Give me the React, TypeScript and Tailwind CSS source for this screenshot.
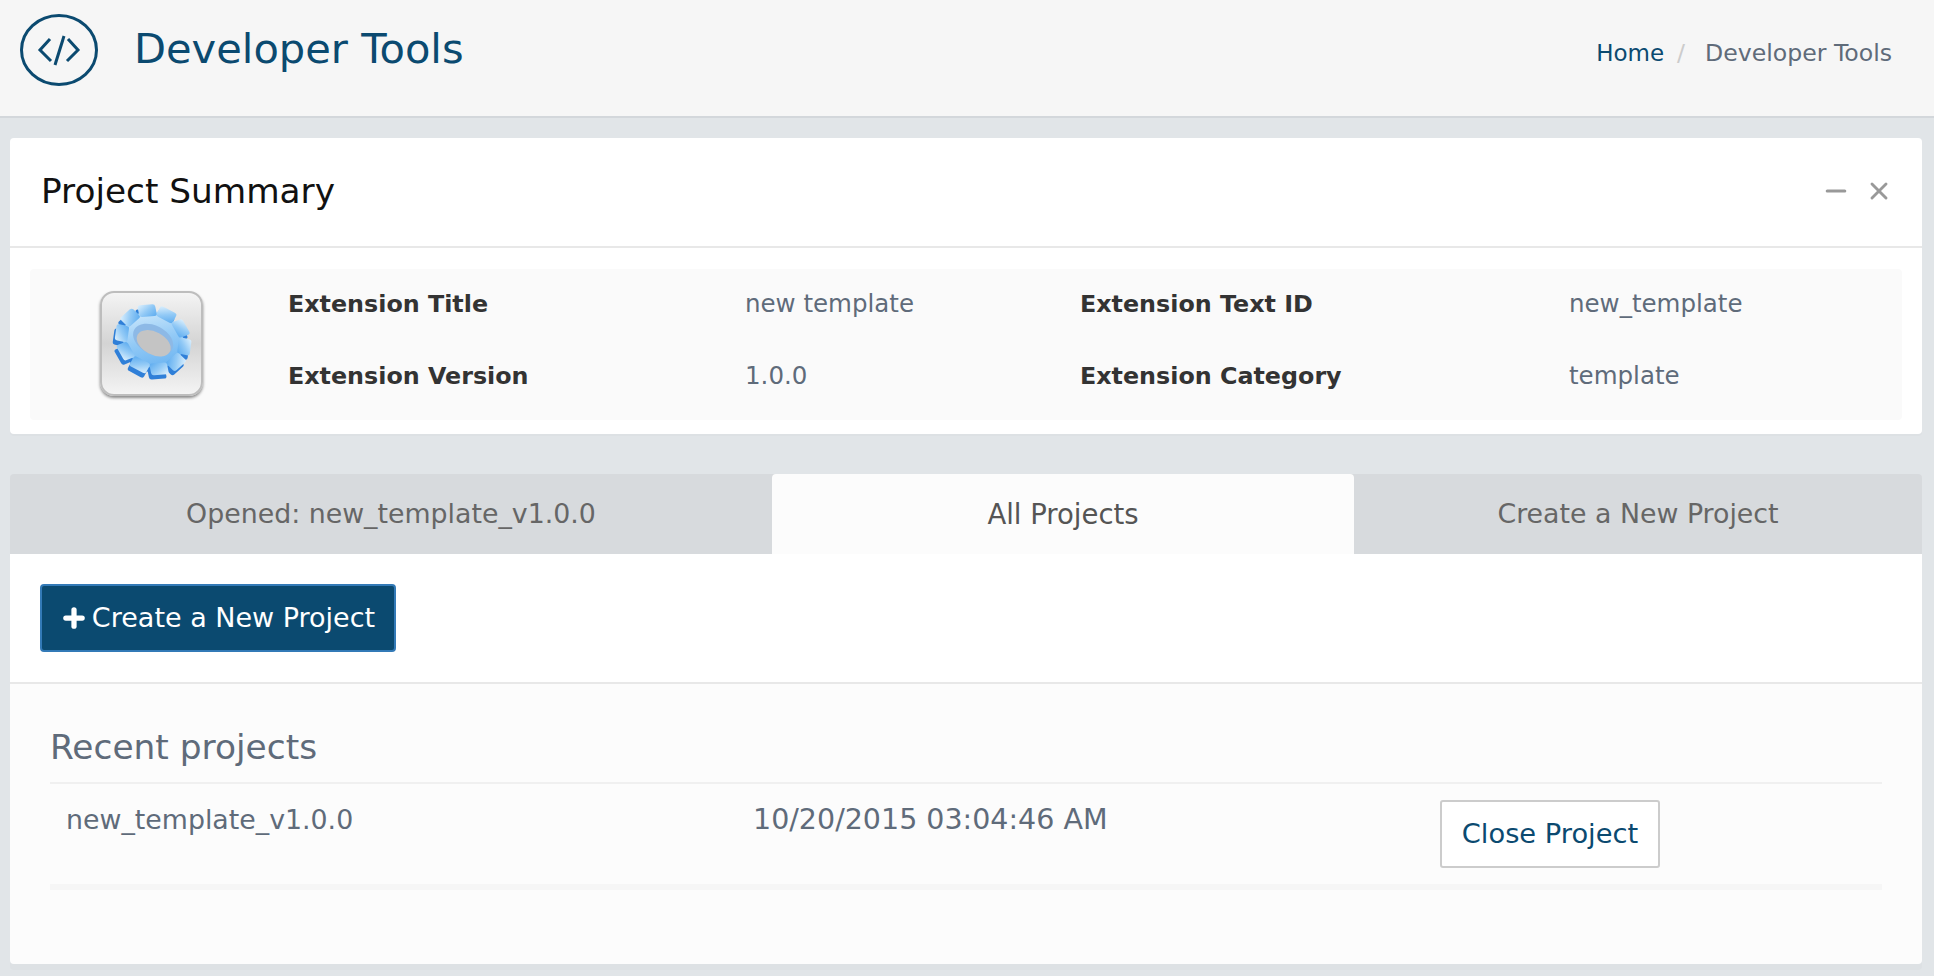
import React from 'react';
import { Plus, X, Minus } from 'lucide-react';

const teeth = [0, 36, 72, 108, 144, 180, 216, 252, 288, 324];

const GearShape = ({ fill }: { fill: string }) => (
  <g fill={fill}>
    <circle r="29" />
    {teeth.map((a) => (
      <rect key={a} x="-8.5" y="-36" width="17" height="12" rx="2.5" transform={`rotate(${a})`} />
    ))}
  </g>
);

const GearIcon = () => (
  <div className="w-[103px] h-[105px] rounded-[14px] border-2 border-[#bdbdbd] bg-gradient-to-b from-[#f4f4f4] via-[#d4d4d4] to-[#f4f4f4] shadow-[0_2px_3px_rgba(0,0,0,0.45)] flex items-center justify-center">
    <svg width="86" height="86" viewBox="0 0 80 80">
      <defs>
        <linearGradient id="gearFace" x1="0" y1="0" x2="1" y2="1">
          <stop offset="0" stopColor="#dff1fd" />
          <stop offset="0.5" stopColor="#93caf6" />
          <stop offset="1" stopColor="#5cabef" />
        </linearGradient>
      </defs>
      <g transform="translate(42 37)">
        <g transform="translate(-2 4) rotate(28) scale(1 0.88)">
          <GearShape fill="#2f7fd8" />
        </g>
        <g transform="rotate(28) scale(1 0.88)">
          <GearShape fill="url(#gearFace)" />
          <ellipse rx="20" ry="15" fill="#8db9e6" />
          <ellipse cx="2" cy="3" rx="17" ry="12" fill="#c4c4c4" />
        </g>
      </g>
    </svg>
  </div>
);

export default function App() {
  return (
    <div className="min-h-[976px] bg-[#e1e5e8] font-['DejaVu_Sans',sans-serif] text-[#5f6b7a] overflow-hidden">
      {/* Page header */}
      <div className="h-[118px] bg-[#f6f6f6] border-b-2 border-[#d3d7db] flex items-start justify-between pl-5 pr-[42px]">
        <div className="flex items-center mt-[14px]">
          <svg width="78" height="72" viewBox="0 0 78 72" fill="none" stroke="#0b4a70">
            <ellipse cx="39" cy="36" rx="37.5" ry="34.5" strokeWidth="3" />
            <path d="M30 25 L20 36 L31 47" strokeWidth="3" />
            <path d="M48 25 L58 36 L47 47" strokeWidth="3" />
            <path d="M44 22 L35 51" strokeWidth="3" />
          </svg>
          <h1 className="ml-[36px] text-[41.6px] leading-[52px] text-[#0b4a70] -mt-[3px]">Developer Tools</h1>
        </div>
        <div className="flex items-center text-[23.6px] mt-[35px] leading-[36px]">
          <span className="text-[#0b4a70] text-[23px]">Home</span>
          <span className="ml-[13px] mr-[20px] text-[#cccccc]">/</span>
          <span>Developer Tools</span>
        </div>
      </div>

      {/* Project summary */}
      <div className="ml-[10px] mr-[12px] mt-[20px] bg-white rounded-[4px] shadow-[0_2px_0_#dde1e4]">
        <div className="h-[110px] border-b-2 border-[#e8e8e8] flex items-center justify-between pl-[31px] pr-[29px]">
          <h2 className="text-[34.3px] text-[#111111]">Project Summary</h2>
          <div className="flex items-center gap-[14px] text-[#999999] -mt-[2px]">
            <Minus size={30} strokeWidth={2.5} />
            <X size={28} strokeWidth={2.5} />
          </div>
        </div>
        <div className="px-[20px] pt-[21px] pb-[14px]">
          <div className="h-[151px] bg-[#fafafa] rounded-[4px] flex items-center text-[24.5px]">
            <div className="w-[242px] mr-[16px] flex justify-center shrink-0 -mt-[3px]">
              <GearIcon />
            </div>
            <div className="grid grid-cols-[457px_335px_489px_1fr] flex-1 gap-y-[36px] -mt-[9px] leading-[36px]">
              <span className="font-bold text-[#333333] text-[23.8px]">Extension Title</span>
              <span>new template</span>
              <span className="font-bold text-[#333333] text-[23.8px]">Extension Text ID</span>
              <span>new_template</span>
              <span className="font-bold text-[#333333] text-[23.8px]">Extension Version</span>
              <span>1.0.0</span>
              <span className="font-bold text-[#333333] text-[23.8px]">Extension Category</span>
              <span>template</span>
            </div>
          </div>
        </div>
      </div>

      {/* Tabs */}
      <div className="ml-[10px] mr-[12px] mt-[40px] rounded-[4px] shadow-[0_6px_0_#dde1e4]">
        <div className="flex h-[80px] bg-[#d7dadd] rounded-t-[4px] text-[26.8px] text-[#666666]">
          <div className="w-[762px] flex items-center justify-center">Opened: new_template_v1.0.0</div>
          <div className="w-[582px] flex items-center justify-center bg-[#fcfcfc] rounded-t-[4px] text-[#555555] text-[27.5px] pt-[1px]">All Projects</div>
          <div className="flex-1 flex items-center justify-center">Create a New Project</div>
        </div>
        <div className="bg-white h-[130px] border-b-2 border-[#e8e8e8] pl-[30px] pt-[30px]">
          <button className="h-[68px] w-[356px] bg-[#0b4a70] border-2 border-[#337ab7] rounded-[4px] text-white text-[27px] pr-[1px] flex items-center justify-center">
            <Plus size={28} strokeWidth={4.5} className="mr-[4px]" />
            Create a New Project
          </button>
        </div>
        <div className="bg-[#fcfcfc] h-[280px] rounded-b-[4px] px-[40px] pt-[40px]">
          <h3 className="text-[34.4px] leading-[46px] pb-[12px] border-b-2 border-[#f0f0f0]">Recent projects</h3>
          <div className="h-[106px] border-b-[6px] border-[#f6f6f6] flex items-start text-[26.8px] pt-[16px]">
            <span className="w-[703px] pl-[16px]">new_template_v1.0.0</span>
            <span className="w-[687px] mt-[2px] text-[28.5px] leading-[36px]">10/20/2015 03:04:46 AM</span>
            <button className="h-[68px] w-[220px] border-2 border-[#cccccc] rounded-[3px] bg-white text-[#0b4a70] text-[27.3px]">Close Project</button>
          </div>
        </div>
      </div>
    </div>
  );
}
